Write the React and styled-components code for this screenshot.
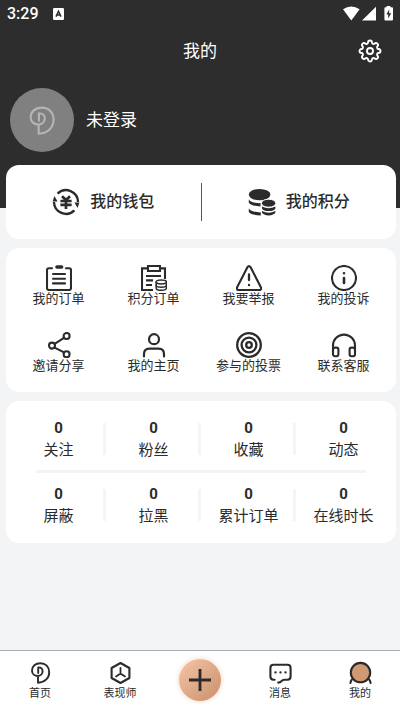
import React from "react";
import styled, { createGlobalStyle } from "styled-components";

const INK = "#2b2b2b";

const GlobalStyle = createGlobalStyle`
  * { box-sizing: border-box; }
  body {
    margin: 0;
    background: #f3f4f6;
    color: ${INK};
    font-family: Roboto, "Noto Sans CJK SC", sans-serif;
  }
  button { font: inherit; color: inherit; background: none; border: 0; padding: 0; cursor: pointer; }
  a { color: inherit; text-decoration: none; }
  svg { display: block; flex: none; }
`;

const Page = styled.div`
  min-height: 100vh;
  display: flex;
  flex-direction: column;
`;

const Hero = styled.header`
  background: #2d2d2d;
  color: #fff;
  padding-bottom: 56px;
`;

const StatusBar = styled.div`
  height: 28px;
  padding: 0 7px;
  display: flex;
  align-items: center;
  gap: 14px;
`;

const Clock = styled.span`
  font-size: 16px;
  line-height: 28px;
  font-weight: 500;
`;

const StatusIcons = styled.div`
  margin-left: auto;
  display: flex;
`;

const TitleBar = styled.div`
  height: 46px;
  padding: 0 16px;
  display: grid;
  grid-template-columns: 28px 1fr 28px;
  align-items: center;
`;

const Title = styled.h1`
  grid-column: 2;
  margin: 0;
  text-align: center;
  font-size: 17px;
  line-height: 24px;
  font-weight: 400;
`;

const Profile = styled.button`
  margin: 14px 10px 0;
  display: flex;
  align-items: center;
  gap: 12px;
`;

const Avatar = styled.span`
  width: 64px;
  height: 64px;
  border-radius: 50%;
  background: #808080;
  color: #b4b4b4;
  display: grid;
  place-items: center;
`;

const UserName = styled.span`
  font-size: 17px;
  line-height: 24px;
`;

const Main = styled.main`
  flex: 1;
  margin-top: -43px;
  padding: 0 4px 16px 6px;
  display: flex;
  flex-direction: column;
  gap: 9px;
`;

const Card = styled.section`
  background: #fff;
  border-radius: 13px;
`;

const WalletCard = styled(Card)`
  height: 74px;
  display: grid;
  grid-template-columns: 1fr 1px 1fr;
  align-items: center;
`;

const WalletLink = styled.a`
  display: flex;
  align-items: center;
  justify-content: center;
  gap: 10px;
  font-size: 16px;
  line-height: 24px;
  font-weight: 500;
`;

const WalletDivider = styled.span`
  height: 38px;
  background: #555;
`;

const MenuCard = styled(Card)`
  padding: 17px 5px 18px;
  display: grid;
  grid-template-columns: repeat(4, 1fr);
  row-gap: 25px;
`;

const MenuLink = styled.a`
  display: flex;
  flex-direction: column;
  align-items: center;
  font-size: 13px;
  line-height: 16px;
  white-space: nowrap;
`;

const StatsCard = styled(Card)`
  padding: 16px 5px;
`;

const StatRow = styled.div`
  display: grid;
  grid-template-columns: repeat(4, 1fr);
`;

const StatRule = styled.hr`
  height: 3px;
  margin: 9px 25px 10px;
  border: 0;
  background: #f3f3f4;
`;

const Stat = styled.a`
  position: relative;
  display: flex;
  flex-direction: column;
  align-items: center;
  font-size: 15px;
  line-height: 22px;
  white-space: nowrap;

  &:not(:last-child)::after {
    content: "";
    position: absolute;
    right: 0;
    top: 6px;
    width: 3px;
    height: 32px;
    background: #f5f5f6;
  }
`;

const StatValue = styled.strong`
  font-size: 15px;
  line-height: 22px;
  font-weight: 700;
`;

const TabBar = styled.nav`
  position: sticky;
  bottom: 0;
  height: 61px;
  background: #fff;
  border-top: 1px solid #a9abad;
  display: grid;
  grid-template-columns: repeat(5, 1fr);
`;

const Tab = styled.a`
  padding-top: 10px;
  display: flex;
  flex-direction: column;
  align-items: center;
  gap: 2px;
  font-size: 11px;
  line-height: 16px;
`;

const AddButton = styled.button`
  margin-top: 8px;
  justify-self: center;
  width: 42px;
  height: 42px;
  border-radius: 50%;
  background: linear-gradient(135deg, #f6c6a5, #c98f6c);
  box-shadow: 0 0 4px 1px #f8dfd2;
  display: grid;
  place-items: center;
`;

function Icon({ size = 26, width, height, box, weight = 2.1, children }) {
  const w = width || size;
  const h = height || size;
  return (
    <svg
      width={w}
      height={h}
      viewBox={box || `0 0 ${w} ${h}`}
      fill="none"
      stroke="currentColor"
      strokeWidth={weight}
      strokeLinecap="round"
      strokeLinejoin="round"
      aria-hidden="true"
    >
      {children}
    </svg>
  );
}

const Logo = ({ width = 21, height = 23, weight = 1.9 }) => (
  <Icon width={width} height={height} box="0 0 21 23" weight={weight}>
    <path d="M8 15V21.8C15.2 21.4 19.2 16.8 19.2 11.2C19.2 5.8 15.6 2.2 10.4 2.2C5.4 2.2 2 5.4 2 9.4C2 12.8 4.6 15 8 15C10.8 14.8 12.6 12.6 12.6 10.2C12.6 8 10.8 6.4 8.2 6.4V12" />
  </Icon>
);

const GearIcon = () => (
  <Icon size={28} box="0 0 24 24" weight={1.6}>
    <path d="M10.3 4.9C10.3 2.4 13.7 2.4 13.7 4.9A1.5 1.5 0 0 0 15.82 5.78C17.59 4.01 19.99 6.41 18.22 8.18A1.5 1.5 0 0 0 19.1 10.3C21.6 10.3 21.6 13.7 19.1 13.7A1.5 1.5 0 0 0 18.22 15.82C19.99 17.59 17.59 19.99 15.82 18.22A1.5 1.5 0 0 0 13.7 19.1C13.7 21.6 10.3 21.6 10.3 19.1A1.5 1.5 0 0 0 8.18 18.22C6.41 19.99 4.01 17.59 5.78 15.82A1.5 1.5 0 0 0 4.9 13.7C2.4 13.7 2.4 10.3 4.9 10.3A1.5 1.5 0 0 0 5.78 8.18C4.01 6.41 6.41 4.01 8.18 5.78A1.5 1.5 0 0 0 10.3 4.9Z" />
    <circle cx="12" cy="12" r="2.6" />
  </Icon>
);

const KeyboardBadge = () => (
  <svg width="11" height="12" viewBox="0 0 11 12" aria-hidden="true">
    <rect width="11" height="12" rx="1.2" fill="#fff" />
    <path d="M3 8.6L5.5 3.2L8 8.6M4 6.9H7" fill="none" stroke="#2d2d2d" strokeWidth="1.5" />
  </svg>
);

const SignalIcons = () => (
  <svg width="50" height="16" viewBox="0 0 50 16" fill="#fff" aria-hidden="true">
    <path d="M0 3.2Q8.3-2 16.6 3.2L8.3 14.4Z" />
    <path d="M19 14.4L33 .8V14.4Z" />
    <path d="M43.6 0H47.4V1.2H49Q50 1.2 50 2.2V13.6Q50 14.6 49 14.6H42.4Q41.4 14.6 41.4 13.6V2.2Q41.4 1.2 42.4 1.2H43.6Z" />
    <path d="M46.2 3.4L43.4 8.4H45.2V12.4L48.2 7.2H46.2Z" fill="#2d2d2d" />
  </svg>
);

const WalletIcon = () => (
  <Icon size={28} weight={2.3}>
    <g strokeLinecap="butt">
      <path d="M5.6 5.6A12 12 0 0 1 26 14" />
      <path d="M22.4 22.4A12 12 0 0 1 2 14" />
    </g>
    <path d="M22.4 14.4H27.4L25.6 20ZM.6 13.6H5.6L2.4 8Z" fill="currentColor" stroke="none" />
    <path d="M10 8.2L14 12L18 8.2M8.4 13H19.6M8.4 16.8H19.6M14 12V21" strokeWidth="2.7" strokeLinecap="butt" />
  </Icon>
);

const CoinsIcon = () => (
  <svg width="28" height="28" viewBox="0 0 28 28" fill="currentColor" aria-hidden="true">
    <ellipse cx="11.6" cy="6.6" rx="10.8" ry="5.7" />
    <path d="M.8 11.4Q3.4 15 12.8 15.2Q12.4 16 12.6 18.4Q3 18 .8 14.8Z" />
    <path d="M.8 20.6Q3.4 24.2 12.8 24.4V27.4Q3 27.2.8 24Z" />
    <ellipse cx="20.6" cy="15.2" rx="7.2" ry="4" stroke="#fff" strokeWidth="1" />
    <path d="M14 18.4Q20.6 22 27.4 18.4V20.4Q26 23 20.6 23Q15.4 23 14 20.4ZM14 23Q20.6 26.4 27.4 23V24.6Q26 27.4 20.6 27.4Q15.4 27.4 14 24.6Z" />
  </svg>
);

const OrderIcon = () => (
  <Icon>
    <path d="M6 3.2H2.8Q1 3.2 1 5V23Q1 25 3 25H23Q25 25 25 23V5Q25 3.2 23.2 3.2H20" />
    <path d="M11 2H15.6" strokeWidth="3.6" />
    <path d="M7 9H19M7 13.8H19M7 18.4H19" />
  </Icon>
);

const PointsOrderIcon = () => (
  <Icon>
    <g strokeLinecap="butt" strokeLinejoin="miter">
      <path d="M7 3.4H1V25H12M19 3.4H24V14M7 1H19V6H7ZM5 11H20M5 15.4H12M5 20H11" />
    </g>
    <g strokeWidth="1.5" fill="#fff">
      <path d="M15.2 17V23.2C15.2 26 25.4 26 25.4 23.2V17" />
      <path d="M15.2 20.2C15.2 22.8 25.4 22.8 25.4 20.2" />
      <ellipse cx="20.3" cy="17" rx="5.1" ry="1.9" />
    </g>
  </Icon>
);

const ReportIcon = () => (
  <Icon>
    <path d="M11.4 2.2Q13 0 14.6 2.2L25 22.6Q25.6 25 23.4 25H2.6Q.4 25 1 22.6Z" />
    <path d="M13 9.4V15M13 20V20.2" strokeWidth="2.3" />
  </Icon>
);

const InfoIcon = () => (
  <Icon>
    <circle cx="13" cy="13" r="12" />
    <path d="M13 13V18M13 8.2V8.3" strokeWidth="2.6" />
  </Icon>
);

const ShareIcon = () => (
  <Icon>
    <circle cx="6" cy="13.6" r="3" />
    <circle cx="20.6" cy="4" r="3" />
    <circle cx="20.6" cy="22.2" r="3" />
    <path d="M8.6 11.8L18 5.8M8.6 15.6L18 20.4" />
  </Icon>
);

const PersonIcon = () => (
  <Icon weight={2.2}>
    <circle cx="13" cy="7.2" r="5" />
    <path d="M3 24.4V22Q3 16.6 8.4 16.6H17.6Q23 16.6 23 22V24.4" />
  </Icon>
);

const TargetIcon = () => (
  <Icon weight={2.3}>
    <circle cx="13" cy="13" r="11.8" />
    <circle cx="13" cy="13" r="7.4" />
    <circle cx="13" cy="13" r="2.8" />
  </Icon>
);

const HeadsetIcon = () => (
  <Icon>
    <path d="M2 20V13.6A11 11 0 0 1 24 13.6V20" />
    <rect x="2" y="15.6" width="5.4" height="8.6" rx="2" />
    <rect x="18.6" y="15.6" width="5.4" height="8.6" rx="2" />
  </Icon>
);

const ArtistIcon = () => (
  <Icon width={21} height={23}>
    <path d="M10.5 2L19.4 7V17L10.5 22L1.6 17V7Z" />
    <path d="M10.5 7V12.4M10.5 12.4L6 15.4M10.5 12.4L15 15.4" strokeWidth="1.8" />
  </Icon>
);

const MessageIcon = () => (
  <Icon width={23} height={23}>
    <path d="M5.6 18.8H4.6Q1.4 18.8 1.4 15.6V7Q1.4 3.8 4.6 3.8H18.4Q21.6 3.8 21.6 7V15.6Q21.6 18.8 18.4 18.8H15.4Q13.6 19 12.4 20.2Q11 21.6 9.2 21.6" />
    <path d="M6.4 11.4H6.6M11.4 11.4H11.6M16.4 11.4H16.6" strokeWidth="2.2" />
  </Icon>
);

const MineIcon = () => (
  <Icon width={23} height={23}>
    <path d="M4.4 17Q1.6 19 1.4 22M18.6 17Q21.4 19 21.6 22" />
    <circle cx="11.5" cy="11.6" r="9.7" fill="#d09973" />
  </Icon>
);

const PlusIcon = () => (
  <Icon size={22} weight={2.8}>
    <path d="M11 0V22M0 11H22" strokeLinecap="butt" />
  </Icon>
);

const menu = [
  ["我的订单", OrderIcon],
  ["积分订单", PointsOrderIcon],
  ["我要举报", ReportIcon],
  ["我的投诉", InfoIcon],
  ["邀请分享", ShareIcon],
  ["我的主页", PersonIcon],
  ["参与的投票", TargetIcon],
  ["联系客服", HeadsetIcon],
];

const socialStats = ["关注", "粉丝", "收藏", "动态"];
const activityStats = ["屏蔽", "拉黑", "累计订单", "在线时长"];

const Stats = ({ labels }) => (
  <StatRow>
    {labels.map((label) => (
      <Stat href="#" key={label}>
        <StatValue>0</StatValue>
        {label}
      </Stat>
    ))}
  </StatRow>
);

export default function App() {
  return (
    <Page>
      <GlobalStyle />
      <Hero>
        <StatusBar>
          <Clock>3:29</Clock>
          <KeyboardBadge />
          <StatusIcons>
            <SignalIcons />
          </StatusIcons>
        </StatusBar>
        <TitleBar>
          <Title>我的</Title>
          <button type="button" aria-label="设置">
            <GearIcon />
          </button>
        </TitleBar>
        <Profile type="button">
          <Avatar>
            <Logo width={28} height={32} weight={1.6} />
          </Avatar>
          <UserName>未登录</UserName>
        </Profile>
      </Hero>
      <Main>
        <WalletCard>
          <WalletLink href="#">
            <WalletIcon />
            我的钱包
          </WalletLink>
          <WalletDivider />
          <WalletLink href="#">
            <CoinsIcon />
            我的积分
          </WalletLink>
        </WalletCard>
        <MenuCard>
          {menu.map(([label, Glyph]) => (
            <MenuLink href="#" key={label}>
              <Glyph />
              {label}
            </MenuLink>
          ))}
        </MenuCard>
        <StatsCard>
          <Stats labels={socialStats} />
          <StatRule />
          <Stats labels={activityStats} />
        </StatsCard>
      </Main>
      <TabBar>
        <Tab href="#">
          <Logo />
          首页
        </Tab>
        <Tab href="#">
          <ArtistIcon />
          表现师
        </Tab>
        <AddButton type="button" aria-label="发布">
          <PlusIcon />
        </AddButton>
        <Tab href="#">
          <MessageIcon />
          消息
        </Tab>
        <Tab href="#" aria-current="page">
          <MineIcon />
          我的
        </Tab>
      </TabBar>
    </Page>
  );
}
